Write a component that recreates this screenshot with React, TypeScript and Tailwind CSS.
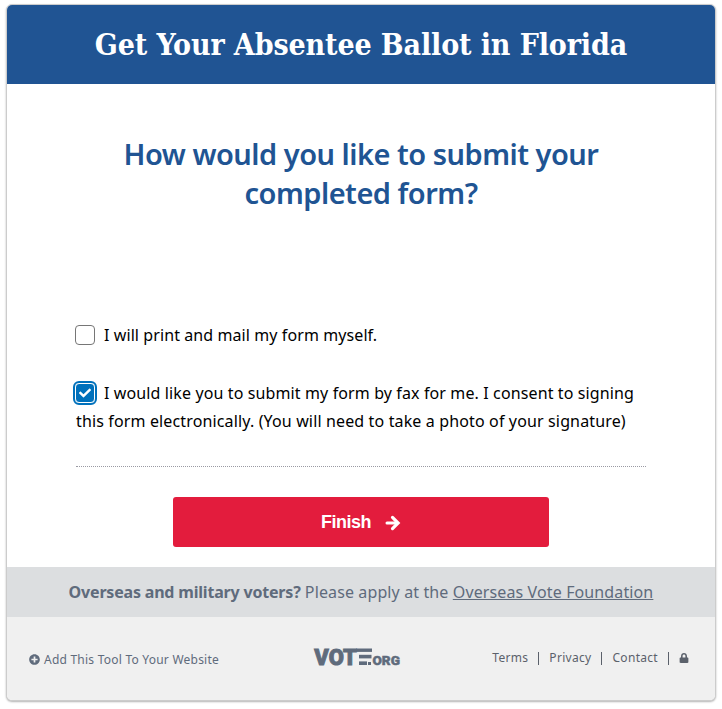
import { FaCheck, FaLock, FaPlusCircle } from "react-icons/fa"

const footerLinks = ["Terms", "Privacy", "Contact"]

function ArrowIcon() {
  return (
    <svg width="16" height="16" viewBox="0 0 16 16" fill="none" stroke="currentColor" className="mt-px">
      <path d="M2 8h10" strokeWidth="3" strokeLinecap="round" />
      <path d="M7.5 2.4 13.1 8l-5.6 5.6" strokeWidth="3.2" strokeLinecap="round" strokeLinejoin="miter" />
    </svg>
  )
}

function Logo() {
  return (
    <svg width="87" height="18" viewBox="0 0 87 18" fill="#5f6b7c" className="block overflow-visible">
      <text x="0.3" y="16.6" textLength="42.5" lengthAdjust="spacingAndGlyphs" fontSize="22" fontWeight="900" fontFamily="Roboto, sans-serif" stroke="#5f6b7c" strokeWidth="0.9">VOT</text>
      <rect x="42" y="0.5" width="16" height="3.4" />
      <rect x="45" y="6.8" width="12.5" height="3.6" />
      <rect x="45" y="13.4" width="8" height="3.6" />
      <rect x="54" y="14" width="3" height="3" />
      <text x="58.5" y="16.7" textLength="27.5" lengthAdjust="spacingAndGlyphs" fontSize="13.5" fontWeight="900" fontFamily="Roboto, sans-serif" stroke="#5f6b7c" strokeWidth="0.5">ORG</text>
    </svg>
  )
}

export default function App() {
  return (
    <div className="h-[709px] bg-white px-[6px] pt-1 font-['Noto_Sans',sans-serif]">
      <div className="h-[697px] overflow-hidden rounded-md border border-[#cccccc] bg-white shadow-[0_1px_2px_rgba(0,0,0,0.3)]">
        <header className="flex h-[79px] items-center justify-center bg-[#205493]">
          <h1 className="whitespace-nowrap font-['DejaVu_Serif_Condensed','DejaVu_Serif',serif] text-[30px] font-bold tracking-[-0.11px] text-white">
            Get Your Absentee Ballot in Florida
          </h1>
        </header>

        <main className="h-[483px] pt-[50px]">
          <h2 className="text-center text-[29px] leading-[39px] font-semibold tracking-[-0.5px] text-[#205493]">
            <span className="block whitespace-nowrap">How would you like to submit your</span>
            <span className="block whitespace-nowrap">completed form?</span>
          </h2>

          <div className="mx-[69px] mt-[109px] border-b border-dotted border-[#9a9aa3] pb-[31px] text-[16px] leading-7 tracking-[0.12px] text-black">
            <label className="-ml-px flex items-center">
              <span className="mr-[9px] size-5 rounded border border-[#767676] bg-white" />
              <span className="whitespace-nowrap tracking-[0.09px]">I will print and mail my form myself.</span>
            </label>
            <label className="mt-[30px] block">
              <span className="-ml-px flex items-center">
                <span className="mr-[9px] flex size-5 items-center justify-center rounded border border-white bg-[#0071bc] text-white outline-2 outline-[#0071bc]">
                  <FaCheck size={12} />
                </span>
                <span className="whitespace-nowrap">I would like you to submit my form by fax for me. I consent to signing</span>
              </span>
              <span className="block whitespace-nowrap tracking-[0.14px]">this form electronically. (You will need to take a photo of your signature)</span>
            </label>
          </div>

          <button className="mx-auto mt-[30px] flex h-[50px] w-[376px] items-center justify-center gap-[14px] rounded-[3px] bg-[#e31c3d] font-['Liberation_Sans',sans-serif] text-[18px] font-bold text-white">
            <span className="tracking-[-0.5px]">Finish</span>
            <ArrowIcon />
          </button>
        </main>

        <div className="flex h-[50px] items-center justify-center bg-[#dcdee0] text-[16px] whitespace-nowrap text-[#5f6b7c]">
          <p>
            <b className="tracking-[-0.19px]">Overseas and military voters?</b>
            <span className="tracking-[0.12px]">
              {" "}Please apply at the <a className="underline">Overseas Vote Foundation</a>
            </span>
          </p>
        </div>

        <footer className="grid h-[83px] grid-cols-[307px_87px_1fr] bg-[#f0f0f0] text-[12px] text-[#5f6b7c]">
          <a className="ml-[22px] flex h-[86px] items-center gap-1 whitespace-nowrap">
            <FaPlusCircle size={11} className="-mt-px" />
            <span className="tracking-[0.23px]">Add This Tool To Your Website</span>
          </a>
          <div className="pt-[31px]">
            <Logo />
          </div>
          <nav className="flex h-[82px] items-center justify-end pr-[26px] text-[#5b616b]">
            {footerLinks.map((link) => (
              <span key={link} className="flex items-center">
                <a className="tracking-[0.3px]">{link}</a>
                <span className="mr-[10px] ml-[10px] h-[13px] w-px bg-[#5b616b]" />
              </span>
            ))}
            <FaLock size={10} />
          </nav>
        </footer>
      </div>
    </div>
  )
}
